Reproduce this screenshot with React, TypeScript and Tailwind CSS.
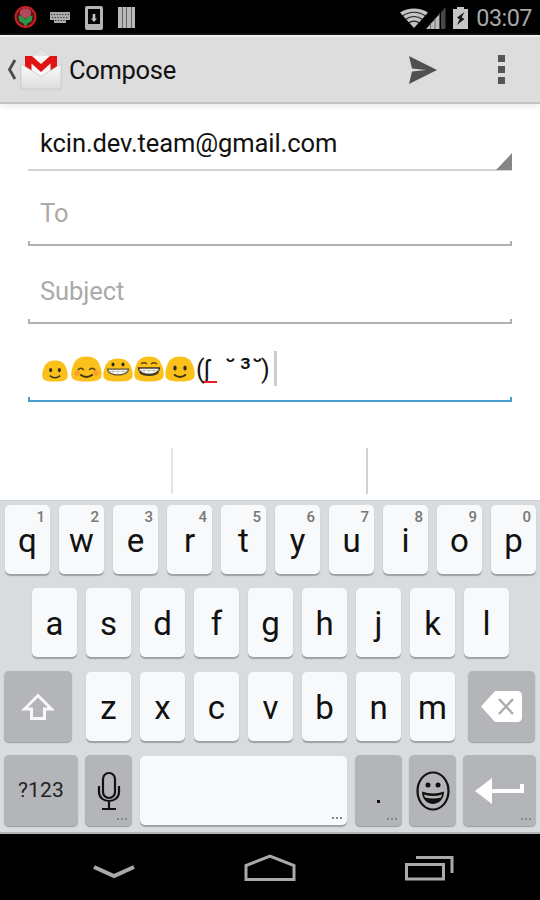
import type { ReactNode } from "react";
import clsx from "clsx";

type KeyProps = {
  label?: string;
  hint?: string;
  dark?: boolean;
  more?: boolean;
  className?: string;
  children?: ReactNode;
};

const topRow = ["q", "w", "e", "r", "t", "y", "u", "i", "o", "p"];
const homeRow = ["a", "s", "d", "f", "g", "h", "j", "k", "l"];
const bottomRow = ["z", "x", "c", "v", "b", "n", "m"];

const Key = ({ label, hint, dark, more, className, children }: KeyProps) => (
  <button
    className={clsx(
      "relative flex shrink-0 items-center justify-center rounded-[5px]",
      dark
        ? "h-[71px] bg-[#b3b5b9] shadow-[0_1px_1px_#95999d]"
        : "h-[69px] bg-[#f7f9fa] shadow-[0_2px_1px_#9ea1a5]",
      className ?? "w-[45px]",
    )}
  >
    {label && (
      <span className="mt-[1px] text-[33px] leading-none text-[#111]">
        {label}
      </span>
    )}
    {hint && (
      <span className="absolute top-[4px] right-[5px] text-[15px] leading-4 font-medium text-[#777]">
        {hint}
      </span>
    )}
    {children}
    {more && (
      <span className="absolute right-[5px] bottom-[6px] flex gap-[2px]">
        <i className="size-[2px] bg-[#85888c]" />
        <i className="size-[2px] bg-[#85888c]" />
        <i className="size-[2px] bg-[#85888c]" />
      </span>
    )}
  </button>
);

const StatusBar = () => (
  <div className="flex h-[35px] items-center bg-black pr-[8px] pl-[14px]">
    <svg width="24" height="24" viewBox="0 0 24 24" className="mt-[-1px]">
      <circle cx="11.500" cy="12" r="10" fill="#5c1416" stroke="#c8201f" strokeWidth="2" />
      <path d="M4.500 10.500l4 1 3 3 3-3 4-1-1 6-3.500 1.500-2.500 3.500-2.500-3.500-3.500-1.500z" fill="#239a49" />
      <path d="M6 6l3-2.500h5l3 2.500v4l-5.500 4L6 10z" fill="#b5495c" />
    </svg>
    <svg width="22" height="14" viewBox="0 0 22 14" className="ml-[11px]">
      <path d="M1 1h20v8h-4v3H5V9H1z" fill="#aaa" />
      <path
        d="M2 3.500h18M3 6.500h16M6 9.500h10"
        stroke="#333"
        strokeWidth="1.200"
        strokeDasharray="1.200 1.600"
      />
    </svg>
    <svg width="18" height="24" viewBox="0 0 18 24" className="ml-[14px]">
      <rect width="18" height="24" rx="2" fill="#b5b5b5" />
      <path d="M3 3h12v15H3z" fill="#050505" />
      <path d="M7.700 8h2.600v4.500H12L9 16 6 12.500h1.700z" fill="#c6c6c6" />
    </svg>
    <div className="ml-[15px] flex h-[21px] gap-px bg-[#666]">
      <i className="w-[3.500px] bg-[#b9b9b9]" />
      <i className="w-[3.500px] bg-[#b9b9b9]" />
      <i className="w-[3.500px] bg-[#b9b9b9]" />
      <i className="w-[3.500px] bg-[#b9b9b9]" />
    </div>
    <div className="ml-auto flex items-center">
      <svg width="28" height="20" viewBox="0 0 28 20">
        <path d="M0 4.500C8-1 20-1 28 4.500L14 20z" fill="#c4c4c4" />
        <path
          d="M2.500 8c7-5 16-5 23 0M5.500 11.500c5-4 12-4 17 0M8.500 15c3.500-2.500 7.500-2.500 11 0"
          fill="none"
          stroke="#222"
          strokeWidth="1.200"
        />
      </svg>
      <svg width="20" height="22" viewBox="0 0 20 22" className="ml-[-2px]">
        <path d="M0 22L13.500 7v15z" fill="#bdbdbd" />
        <path d="M15 5.500L19.500 0v22H15z" fill="#464646" />
        <path d="M4.500 16v6M9 11v11M13.500 6v16" stroke="#555" strokeWidth=".8" />
      </svg>
      <svg width="15" height="22" viewBox="0 0 15 22" className="ml-[7px]">
        <path d="M4 0h7v2h4v20H0V2h4z" fill="#c6c6c6" />
        <path d="M11.500 5L4 10.500l2.500 2L4 18l7.500-6-2.800-1.800z" fill="#1b1b1b" />
      </svg>
      <span className="mt-[3px] ml-[8px] text-[23.400px] leading-none tracking-[-0.500px] text-[#a9a9a9]">
        03:07
      </span>
    </div>
  </div>
);

const ActionBar = () => (
  <header className="flex h-[69px] items-center border-t-2 border-b-2 border-t-[#eee] border-b-[#c4c4c4] bg-[#ddd] pr-[35px] pl-[7px] shadow-[0_3px_5px_#eee]">
    <svg width="10" height="22" viewBox="0 0 10 22">
      <path d="M8 1L2.500 10.500 8 20" fill="none" stroke="#4b4b4b" strokeWidth="2.800" />
    </svg>
    <svg width="42" height="42" viewBox="0 0 42 42" className="ml-[3px]">
      <defs>
        <linearGradient id="envelope" x1="0" y1="0" x2="0" y2="1">
          <stop stopColor="#fafafa" />
          <stop offset="1" stopColor="#dedede" />
        </linearGradient>
      </defs>
      <path d="M1 15L21 0l20 15v25H1z" fill="#e4e4e4" stroke="#d0d0d0" strokeWidth=".8" />
      <path d="M5 7h32v20H5z" fill="#f9f9f9" />
      <path d="M5 7h7l9 8 9-8h7v15h-6.500V14.500L21 23l-9.500-8.500V22H5z" fill="#df1515" />
      <path d="M1 15l20 12.500L41 15v25H1z" fill="url(#envelope)" stroke="#c8c8c8" strokeWidth=".8" />
    </svg>
    <h1 className="mt-[2px] ml-[7px] text-[25.500px] leading-none tracking-[-0.300px] text-[#111]">
      Compose
    </h1>
    <svg width="28" height="28" viewBox="0 0 28 28" className="mr-[1px] ml-auto">
      <path d="M0 0l28 14L0 28l3-12.500 14-1.500-14-1.500z" fill="#505050" />
    </svg>
    <div className="ml-[60px] flex flex-col gap-[3.500px]">
      <i className="size-[7.500px] bg-[#555]" />
      <i className="size-[7.500px] bg-[#555]" />
      <i className="size-[7.500px] bg-[#555]" />
    </div>
  </header>
);

type BlobProps = {
  width: number;
  height: number;
  mood: "smile" | "blush" | "grin" | "laugh";
};

const Blob = ({ width, height, mood }: BlobProps) => (
  <svg width={width} height={height} viewBox="0 0 30 26" preserveAspectRatio="none">
    <path
      d="M15 .5C8 .5 4 3.500 2 9.500 .5 14 0 17 .5 20c.5 4 5 5.500 14.500 5.500s14-1.500 14.500-5.500c.5-3 0-6-1.500-10.500C26 3.500 22 .5 15 .5z"
      fill="#fbc01a"
    />
    {mood === "blush" && (
      <g fill="#f9a02b">
        <circle cx="6" cy="17" r="2.800" />
        <circle cx="24" cy="17" r="2.800" />
      </g>
    )}
    {mood === "smile" && (
      <g fill="#302b20">
        <ellipse cx="10" cy="12" rx="1.700" ry="2.500" />
        <ellipse cx="20" cy="12" rx="1.700" ry="2.500" />
      </g>
    )}
    {(mood === "blush" || mood === "laugh") && (
      <path
        d={mood === "laugh" ? "M7 8q3-2.500 6 0M17 8q3-2.500 6 0" : "M6.500 14q3-3.500 6 0M17.500 14q3-3.500 6 0"}
        fill="none"
        stroke="#5b4718"
        strokeWidth="1.400"
      />
    )}
    {mood === "grin" && (
      <g fill="#302b20">
        <ellipse cx="10" cy="7" rx="1.500" ry="2" />
        <ellipse cx="20" cy="7" rx="1.500" ry="2" />
      </g>
    )}
    {mood === "smile" || mood === "blush" ? (
      <path d="M9 18.500q6 5 12 0" fill="none" stroke="#3e321b" strokeWidth="1.800" />
    ) : (
      <g>
        <path
          d="M4.500 12h21c0 8.500-21 8.500-21 0z"
          fill="#fff"
          stroke={mood === "laugh" ? "#3a3120" : "#5c5233"}
          strokeWidth="1.300"
        />
        <path d="M5 14.500h20M10 12v5M15 12v6M20 12v5" stroke="#aaa59a" strokeWidth=".6" />
        {mood === "laugh" && (
          <path d="M6 16c2 4 16 4 18 0" fill="none" stroke="#433820" strokeWidth="1.800" />
        )}
      </g>
    )}
  </svg>
);

const Message = () => (
  <div className="flex h-[73px] items-end pl-[14px]">
    <div className="flex h-[47px] items-start">
      <div className="flex h-[32px] items-end">
        <Blob width={26} height={22} mood="smile" />
        <div className="ml-[3px] flex items-end gap-[1px]">
          <Blob width={31} height={26} mood="blush" />
          <Blob width={30} height={24} mood="grin" />
          <Blob width={30} height={26} mood="laugh" />
          <Blob width={30} height={26} mood="smile" />
        </div>
      </div>
      <div className="ml-[1px] flex h-[38px] items-center text-[25px] leading-none text-[#111]">
        <span className="w-[8px]">(</span>
        <span className="relative w-[21px]">
          ʃ
          <i className="absolute bottom-[-1px] left-0 h-[2px] w-[13px] bg-[#ed1b24]" />
        </span>
        <span className="w-[15px] font-medium">˘</span>
        <span className="w-[12px] text-[30px]">³</span>
        <span className="w-[9px] font-medium">˘</span>
        <span>)</span>
      </div>
      <i className="mt-[1px] ml-[4px] h-[35px] w-[3px] bg-[#ccc]" />
    </div>
  </div>
);

/* Holo style underline with small upturned ends */
const Underline = ({ active }: { active?: boolean }) => (
  <div
    className={clsx(
      "h-[5px] border-x-2 border-b-2",
      active ? "border-[#459fcb]" : "border-[#b0b0b0]",
    )}
  />
);

const NavBar = () => (
  <nav className="flex h-[66px] items-center bg-black px-[86px] pt-[2px]">
    <svg width="56" height="30" viewBox="0 0 56 30">
      <path d="M8 14l20 9 20-9" fill="none" stroke="#aaa" strokeWidth="4" />
    </svg>
    <svg width="52" height="30" viewBox="0 0 52 30" className="ml-[102px]">
      <path d="M2 26.500V12.500L26 3l24 9.500v14z" fill="none" stroke="#aaa" strokeWidth="3" />
    </svg>
    <svg width="49" height="30" viewBox="0 0 49 30" className="ml-auto">
      <path d="M1.500 11.500h37V26h-37zM11 4.500h36V20" fill="none" stroke="#aaa" strokeWidth="3" />
    </svg>
  </nav>
);

export default function App() {
  return (
    <div className="flex h-[900px] w-[540px] flex-col overflow-hidden bg-white font-[Roboto,sans-serif]">
      <StatusBar />
      <ActionBar />
      <main className="h-[396px] px-[28px]">
        <div className="flex h-[67px] items-center justify-between border-b-2 border-[#d4d4d4]">
          <span className="mt-[15px] ml-[12px] text-[25.500px] leading-none tracking-[-0.100px] text-[#111]">
            kcin.dev.team@gmail.com
          </span>
          <svg width="16" height="17" viewBox="0 0 16 17" className="mb-[-1px] self-end">
            <path d="M16 0v17H0z" fill="#858585" />
          </svg>
        </div>
        <div className="flex h-[70px] items-center pt-[15px] pl-[12px] text-[25.500px] text-[#aaa]">
          To
        </div>
        <Underline />
        <div className="flex h-[73px] items-center pt-[18px] pl-[12px] text-[25.500px] tracking-[-0.100px] text-[#aaa]">
          Subject
        </div>
        <Underline />
        <Message />
        <Underline active />
        <div className="mt-[46px] flex h-[46px] justify-between pr-[144px] pl-[143px]">
          <i className="w-[2px] bg-[#e4e4e4]" />
          <i className="w-[2px] bg-[#d2d2d2]" />
        </div>
      </main>
      <section className="flex h-[334px] flex-col border-t border-b-2 border-t-[#ced2d5] border-b-[#afb4b6] bg-[#d8dcdf]">
        <div className="mt-[4px] flex gap-[9px] pl-[5px]">
          {topRow.map((letter, i) => (
            <Key key={letter} label={letter} hint={String((i + 1) % 10)} />
          ))}
        </div>
        <div className="mt-[14px] flex gap-[9px] pl-[32px]">
          {homeRow.map((letter) => (
            <Key key={letter} label={letter} />
          ))}
        </div>
        <div className="mt-[14px] flex items-center gap-[9px] pl-[4px]">
          <Key dark className="mr-[5px] w-[68px]">
            <svg width="34" height="28" viewBox="0 0 34 28">
              <path
                d="M17 2.500L3.500 16h7v9.500h13V16h7z"
                fill="none"
                stroke="#f8f8f8"
                strokeWidth="3"
              />
            </svg>
          </Key>
          {bottomRow.map((letter) => (
            <Key key={letter} label={letter} />
          ))}
          <Key dark className="ml-[4px] w-[67px]">
            <svg width="41" height="31" viewBox="0 0 41 31">
              <path d="M14 0h22q5 0 5 5v21q0 5-5 5H14L0 15.500z" fill="#fff" />
              <path d="M18 8l14 15M32 8L18 23" stroke="#aaacb0" strokeWidth="2.500" />
            </svg>
          </Key>
        </div>
        <div className="mt-[13px] flex items-center gap-[7px] pl-[4px]">
          <Key dark className="w-[74px]">
            <span className="text-[21px] tracking-[0.200px] text-[#222]">?123</span>
          </Key>
          <Key dark more className="w-[47px]">
            <svg width="24" height="40" viewBox="0 0 24 40" fill="none" stroke="#111" strokeWidth="2.200">
              <rect x="6" y="2" width="12" height="25" rx="6" />
              <path d="M2 15v6c0 12 20 12 20 0v-6M12 30v8M5 38h14" />
            </svg>
          </Key>
          <Key more className="ml-[1px] w-[207px]" />
          <Key dark more className="ml-[1px] w-[47px]">
            <i className="mt-[22px] size-[3px] bg-[#111]" />
          </Key>
          <Key dark className="w-[47px]">
            <svg width="34" height="40" viewBox="0 0 34 40">
              <ellipse cx="17" cy="20" rx="15.500" ry="18.500" fill="none" stroke="#111" strokeWidth="2.200" />
              <circle cx="12" cy="14" r="2.500" fill="#111" />
              <circle cx="22" cy="14" r="2.500" fill="#111" />
              <path d="M6 20.500q11 4 22 0C28 37 6 37 6 20.500z" fill="#111" />
              <path d="M8 23.500q9 3 18 0l-1 3q-8 2-16 0z" fill="#b3b5b9" />
            </svg>
          </Key>
          <Key dark more className="w-[73px]">
            <svg width="49" height="26" viewBox="0 0 49 26">
              <path d="M0 13L17 0v11h28V6h4v9H17v11z" fill="#fff" />
            </svg>
          </Key>
        </div>
      </section>
      <NavBar />
    </div>
  );
}
